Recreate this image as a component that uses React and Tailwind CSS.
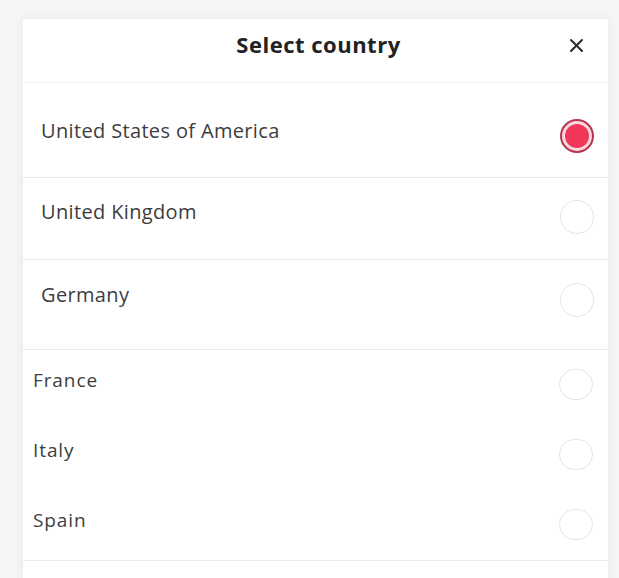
import React from "react";

const top = [
  { name: "United States of America", selected: true, h: "h-[95px]", pt: "pt-[36px]" },
  { name: "United Kingdom", h: "h-[82px]", pt: "pt-[22px]" },
  { name: "Germany", h: "h-[90px]", pt: "pt-[23px]" },
];
const bottom = ["France", "Italy", "Spain"];

function Radio({ selected, small }) {
  if (selected) {
    return (
      <div className="w-[34px] h-[34px] rounded-full border-[2px] border-[#b3374f] bg-[#fbd7de] flex items-center justify-center shrink-0">
        <div className="w-[24px] h-[24px] rounded-full bg-[#f1385b]" />
      </div>
    );
  }
  return (
    <div
      className={
        "rounded-full border-[1.5px] border-[#e5e5e5] bg-white shrink-0 " +
        (small ? "w-[34px] h-[31px]" : "w-[34px] h-[34px]")
      }
    />
  );
}

export default function App() {
  return (
    <div className="w-[619px] h-[578px] overflow-hidden bg-[#f6f6f6] pt-[19px] pl-[23px] pr-[11px]">
      <div
        className="bg-white h-[600px] shadow-[0_0_14px_rgba(0,0,0,0.06)]"
        style={{ fontFamily: '"Open Sans", "Liberation Sans", Arial, sans-serif' }}
      >
        <div className="relative h-[64px] flex items-start justify-center pt-[10px] pl-[6px] border-b border-[#f0f0f0]">
          <span className="text-[22px] leading-[30px] font-bold text-[#222] tracking-[0.5px]">
            Select country
          </span>
          <svg
            className="absolute right-[24px] top-[19px]"
            width="15"
            height="15"
            viewBox="0 0 15 15"
            fill="none"
            stroke="#2a2a2a"
            strokeWidth="2"
            strokeLinecap="round"
          >
            <path d="M2 2 L13 13 M13 2 L2 13" />
          </svg>
        </div>
        {top.map((r) => (
          <div
            key={r.name}
            className={`flex items-start justify-between pl-[18px] pr-[14px] border-b border-[#ebebeb] ${r.h} ${r.pt}`}
          >
            <span className="text-[20px] leading-[24px] text-[#3d3d3d] tracking-[0.35px]">{r.name}</span>
            <Radio selected={r.selected} />
          </div>
        ))}
        <div className="border-b border-[#ebebeb]">
          {bottom.map((n) => (
            <div key={n} className="h-[70px] flex items-start justify-between pl-[10px] pr-[15px] pt-[19px]">
              <span className="text-[19px] leading-[22px] text-[#3d3d3d] tracking-[0.9px]">{n}</span>
              <Radio small />
            </div>
          ))}
        </div>
      </div>
    </div>
  );
}
